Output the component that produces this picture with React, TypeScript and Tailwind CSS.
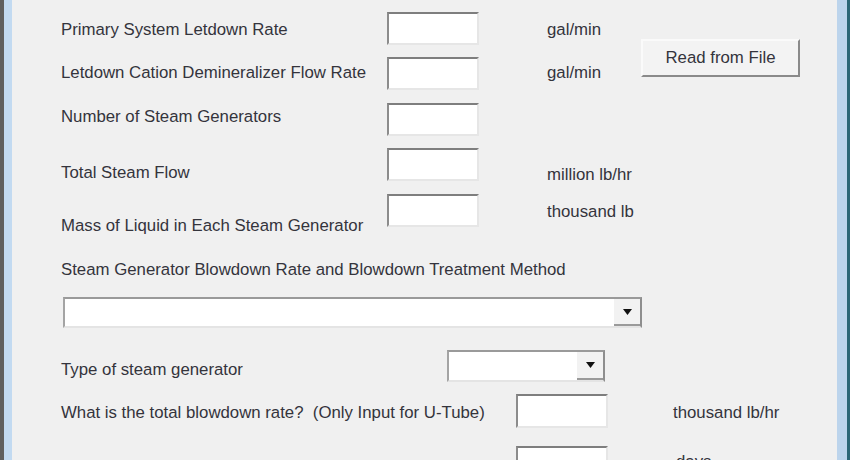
const TextBox = ({ className = '' }: { className?: string }) => (
  <div
    className={
      'h-[33px] w-[92px] shrink-0 border-2 border-t-[#7e7e7e] border-l-[#8c8c8c] border-r-[#e6e6e6] border-b-[#e6e6e6] bg-white ' +
      className
    }
  ></div>
);

const Combo = ({ className = '' }: { className?: string }) => (
  <div
    className={
      'flex shrink-0 border-2 border-t-[#9a9a9a] border-l-[#a4a4a4] border-r-[#8e8e8e] border-b-[#e4e4e4] bg-white ' +
      className
    }
  >
    <div className="flex-1"></div>
    <div className="flex w-[26px] items-center justify-center border-b-2 border-b-[#9a9a9a] bg-[#f2f2f2]">
      <svg width="9" height="6" viewBox="0 0 9 6">
        <path d="M0 0 H9 L4.5 6 Z" fill="#111" />
      </svg>
    </div>
  </div>
);

// top block rows: label / unit offsets are measured from the row top
const rows = [
  { label: 'Primary System Letdown Rate', unit: 'gal/min', lt: 'pt-[8px]', ut: 'pt-[8px]', mt: '' },
  { label: 'Letdown Cation Demineralizer Flow Rate', unit: 'gal/min', lt: 'pt-[6px]', ut: 'pt-[6px]', mt: 'mt-[12px]' },
  { label: 'Number of Steam Generators', unit: '', lt: 'pt-[4px]', ut: '', mt: 'mt-[13px]' },
  { label: 'Total Steam Flow', unit: 'million lb/hr', lt: 'pt-[15px]', ut: 'pt-[17px]', mt: 'mt-[12px]' },
  { label: 'Mass of Liquid in Each Steam Generator', unit: 'thousand lb', lt: 'pt-[22px]', ut: 'pt-[8px]', mt: 'mt-[13px]' },
];

export default function App() {
  return (
    <div
      className="flex h-[460px] w-[850px] overflow-hidden text-[16.8px] leading-[20px] text-[#34343c]"
      style={{ fontFamily: '"Liberation Sans", Arial, sans-serif' }}
    >
      <div className="w-[4px] bg-[#5f5f5f]"></div>
      <div className="w-[8px] bg-[#c2daf1]"></div>
      <div className="flex-1 bg-[#f0f0f0] pl-[49px] pt-[12px]">
        <div className="flex">
          <div className="flex flex-col">
            {rows.map(r => (
              <div key={r.label} className={'flex h-[33px] items-start whitespace-nowrap ' + r.mt}>
                <div className={'w-[326px] ' + r.lt}>{r.label}</div>
                <TextBox />
                <div className={'ml-[68px] w-[94px] ' + r.ut}>{r.unit}</div>
              </div>
            ))}
          </div>
          <button className="mt-[27px] h-[38px] w-[159px] border-2 border-t-[#fafafa] border-l-[#fafafa] border-r-[#8a8a8a] border-b-[#8a8a8a] bg-[#f3f3f3] text-[16.8px] text-[#34343c]">
            Read from File
          </button>
        </div>

        <div className="mt-[33px] whitespace-nowrap">Steam Generator Blowdown Rate and Blowdown Treatment Method</div>
        <Combo className="ml-[2px] mt-[17px] h-[31px] w-[579px]" />

        <div className="mt-[22px] flex items-start">
          <div className="w-[386px] pt-[10px]">Type of steam generator</div>
          <Combo className="h-[32px] w-[158px]" />
        </div>

        <div className="mt-[12px] flex items-start">
          <div className="w-[455px] whitespace-nowrap pt-[9px]">What is the total blowdown rate?&nbsp; (Only Input for U-Tube)</div>
          <TextBox className="h-[34px]" />
          <div className="ml-[65px] whitespace-nowrap pt-[9px]">thousand lb/hr</div>
        </div>

        <div className="mt-[18px] flex items-start">
          <div className="w-[455px]"></div>
          <TextBox className="h-[34px]" />
          <div className="ml-[68px] pt-[6px]">days</div>
        </div>
      </div>
      <div className="w-[10px] bg-[#bcd4ec]"></div>
      <div className="w-[3px] bg-[#2c6676]"></div>
    </div>
  );
}
